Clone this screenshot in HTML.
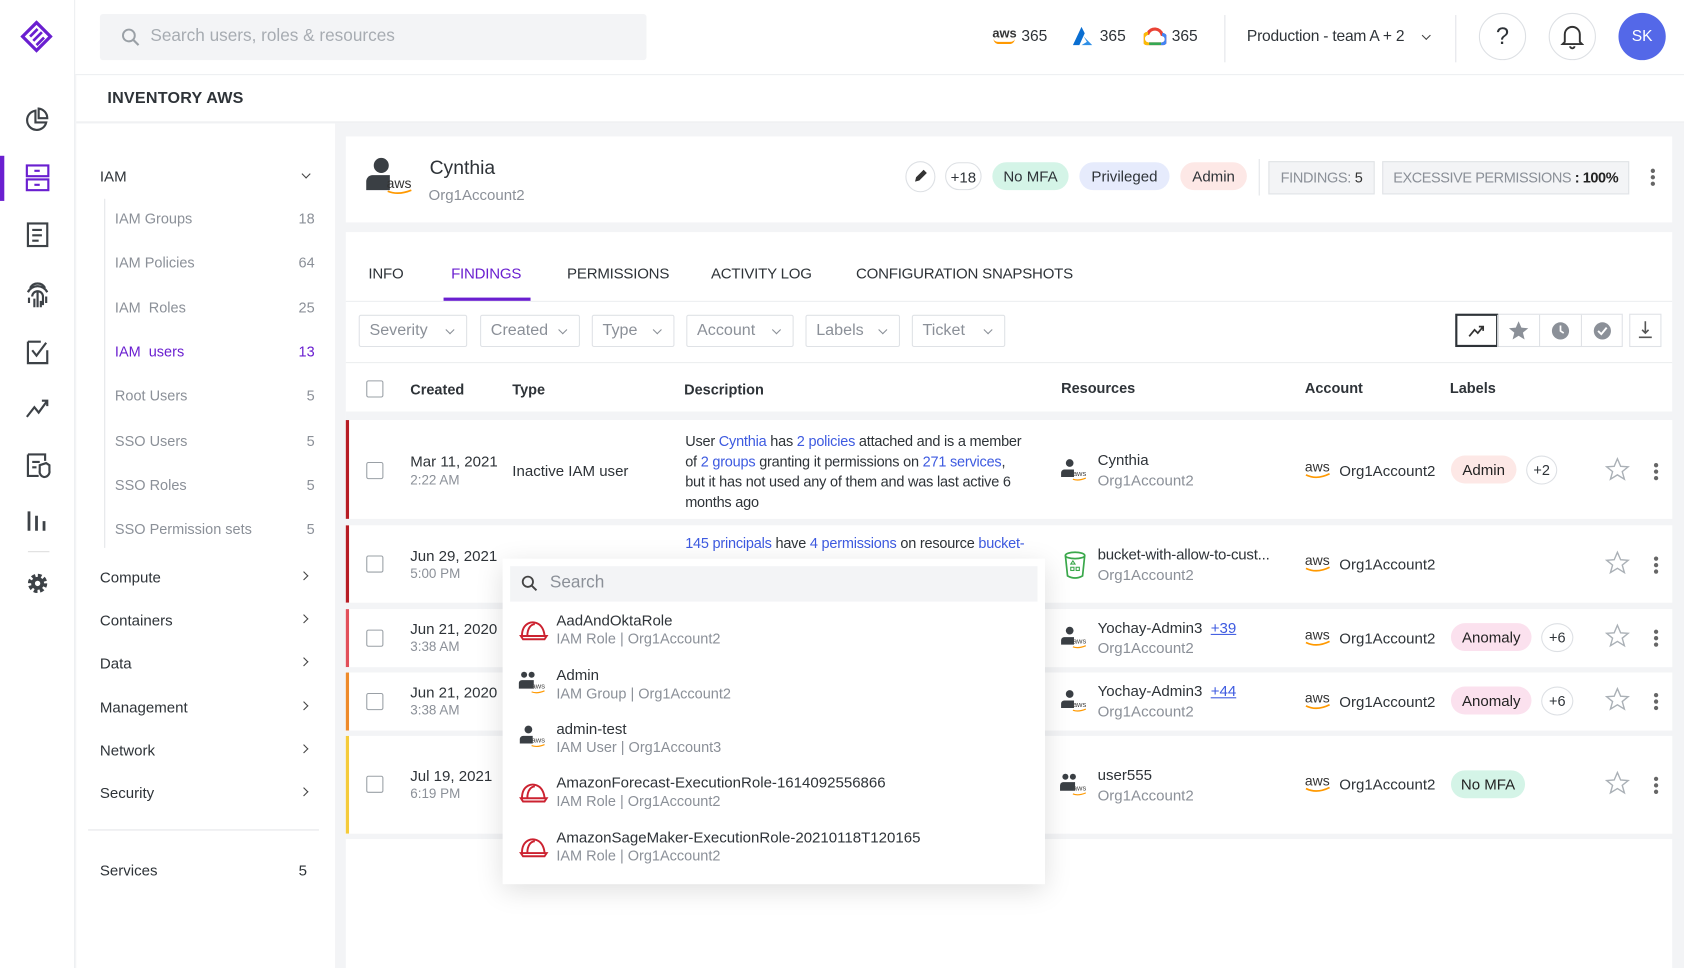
<!DOCTYPE html>
<html><head><meta charset="utf-8">
<style>
*{box-sizing:border-box;margin:0;padding:0}
html,body{width:1684px;height:968px;overflow:hidden;background:#fff}
#w{position:absolute;left:0;top:0;width:1568px;height:901px;transform:scale(1.07398,1.07436);transform-origin:0 0;font-family:"Liberation Sans",sans-serif;color:#2e3338;font-size:13.5px;background:#f3f4f6}
.a{position:absolute;white-space:nowrap}
.g{color:#8b9098}
.lk{color:#3d5ae0}
.pill{position:absolute;height:26px;line-height:26px;border-radius:13px;text-align:center;font-size:14px}
.circ{position:absolute;border:1px solid #dde0e4;border-radius:50%;background:#fff;text-align:center}
.flt{position:absolute;top:293px;height:30px;border:1px solid #dfe2e6;border-radius:2px;color:#8b9098;font-size:15px;line-height:28px;padding-left:9px;background:#fff}
.flt:after{content:"";position:absolute;right:12px;top:10px;width:5px;height:5px;border-right:1.5px solid #8b9098;border-bottom:1.5px solid #8b9098;transform:rotate(45deg)}
.cb{position:absolute;left:341px;width:16px;height:16px;border:1.5px solid #9aa0a6;border-radius:2px;background:#fff}
.row{position:absolute;left:322px;width:1235px;background:#fff}
.bar{position:absolute;left:0;top:0;bottom:0;width:3px}
.chev{position:absolute;width:6px;height:6px;border-right:1.5px solid #444;border-bottom:1.5px solid #444}
.sub{position:absolute;left:107px;color:#8b9098;font-size:13.5px}
.cnt{position:absolute;right:1275px;color:#8b9098;font-size:13.5px}
.cat{position:absolute;left:93px;font-size:14px;color:#2e3338}
.dots{position:absolute;width:4px;height:4px;background:#666;border-radius:50%;box-shadow:0 6px 0 #666,0 12px 0 #666}
.ddi{position:absolute;left:518px;font-size:14px;white-space:nowrap}
.ddi span{display:block;color:#8b9098;font-size:13.5px;margin-top:2px}
.tab{position:absolute;top:246px;font-size:14px;letter-spacing:-0.2px}
</style></head><body><div id="w">

<div class="a" style="left:0;top:0;width:1568px;height:70px;background:#fff;border-bottom:1px solid #eceef0"></div>
<div class="a" style="left:0;top:0;width:70px;height:901px;background:#fff;border-right:1px solid #eceef0"></div>
<svg class="a" style="left:19px;top:19px" width="30" height="32" viewBox="0 0 30 32"><path d="M15 2 L28 15 L15 28 L2 15Z" fill="none" stroke="#6a1fd0" stroke-width="3"/><path d="M9 15 L16 8 M12 19 L20 11 M15 23 L22 16" stroke="#6a1fd0" stroke-width="2.5"/></svg>
<div class="a" style="left:93px;top:13px;width:509px;height:43px;background:#f3f4f6;border-radius:3px"></div>
<svg class="a" style="left:113px;top:26px" width="18" height="18" viewBox="0 0 18 18"><circle cx="7" cy="7" r="5.5" fill="none" stroke="#9aa0a6" stroke-width="1.8"/><path d="M11 11 L16 16" stroke="#9aa0a6" stroke-width="2"/></svg>
<div class="a" style="left:140px;top:25px;font-size:16px;color:#a7acb2">Search users, roles &amp; resources</div>

<div class="a" style="left:924px;top:24px;font-size:12px;color:#333;font-weight:bold">aws</div>
<div class="a" style="left:925px;top:36px;width:20px;height:5px;border-bottom:2px solid #f90;border-radius:0 0 10px 10px"></div>
<div class="a" style="left:951px;top:26px;font-size:14.5px">365</div>
<svg class="a" style="left:998px;top:25px" width="20" height="18" viewBox="0 0 20 18"><path d="M9 0 L1 17 L7 17 L12 6Z" fill="#0a6ed1"/><path d="M11 9 L19 17 L9 17 L14 14Z" fill="#2f8fe6"/></svg>
<div class="a" style="left:1024px;top:26px;font-size:14.5px">365</div>
<svg class="a" style="left:1065px;top:25px" width="21" height="17" viewBox="0 0 21 17"><path d="M5 16 A5 5 0 0 1 4 6 A7 7 0 0 1 17 7 A4.5 4.5 0 0 1 16 16Z" fill="none" stroke="#ea4335" stroke-width="3"/><path d="M5 16 H16" stroke="#34a853" stroke-width="3"/><path d="M16 16 A4.5 4.5 0 0 0 17 7" fill="none" stroke="#4285f4" stroke-width="3"/><path d="M4 6 A5 5 0 0 0 5 16" fill="none" stroke="#fbbc05" stroke-width="3"/></svg>
<div class="a" style="left:1091px;top:26px;font-size:14.5px">365</div>
<div class="a" style="left:1140px;top:14px;width:1px;height:44px;background:#e2e4e8"></div>
<div class="a" style="left:1161px;top:26px;font-size:14.5px;letter-spacing:-0.2px">Production - team A + 2</div>
<div class="chev" style="left:1325px;top:30px;transform:rotate(45deg);border-color:#444"></div>
<div class="a" style="left:1355px;top:14px;width:1px;height:44px;background:#e2e4e8"></div>
<div class="circ" style="left:1377px;top:12px;width:44px;height:44px;line-height:42px;font-size:22px">?</div>
<div class="circ" style="left:1442px;top:12px;width:44px;height:44px"></div>
<svg class="a" style="left:1453px;top:22px" width="22" height="24" viewBox="0 0 22 24"><path d="M4 17 V10 A7 7 0 0 1 18 10 V17 L20 19 H2Z M9 21 A2 2 0 0 0 13 21" fill="none" stroke="#333" stroke-width="1.8"/></svg>
<div class="a" style="left:1507px;top:12px;width:44px;height:44px;border-radius:50%;background:#5468e8;color:#fff;text-align:center;line-height:44px;font-size:14.5px">SK</div>

<div class="a" style="left:0;top:145px;width:4px;height:42px;background:#6a1fd0"></div>
<svg class="a" style="left:22px;top:100px" width="26" height="460" viewBox="0 0 26 460" fill="none" stroke="#3d4247" stroke-width="2">
<path d="M11 3 A9 9 0 1 0 21 14 H11Z M14 1 A9 9 0 0 1 22 10 H14Z"/>
<g stroke="#6a1fd0"><rect x="3" y="54" width="20" height="10"/><rect x="3" y="67" width="20" height="10"/><path d="M10 59 H15 M10 72 H15"/></g>
<rect x="4" y="108" width="18" height="21"/><path d="M8 114 H17 M8 119 H17 M8 124 H14"/>
<path d="M6 168 A8 8 0 0 1 20 168 M4 172 A10 10 0 0 1 22 172 M8 176 A5 5 0 0 1 18 176 V184 M13 172 V186 M10 178 V186 M16 180 V186 M5 177 V182 M21 176 V182"/>
<path d="M4 218 H16 M4 218 V238 H22 V226 M8 226 L12 231 L21 219"/>
<path d="M3 288 L10 279 L14 284 L22 273 M17 273 H22 V278"/>
<path d="M4 323 H20 V329 M4 323 V343 H14 M8 330 H15 M8 335 H12 M15 333 L21 331 L24 333 V338 A5 5 0 0 1 19 344 A5 5 0 0 1 15 338Z"/>
<path d="M5 376 V394 M12 380 V394 M19 385 V394" stroke-width="2.6"/>
</svg>
<div class="a" style="left:26px;top:513px;width:20px;height:1px;background:#ddd"></div>
<svg class="a" style="left:24px;top:532px" width="22" height="22" viewBox="0 0 22 22"><circle cx="11" cy="11" r="7" fill="none" stroke="#3d4247" stroke-width="4" stroke-dasharray="3.3 2.2"/><circle cx="11" cy="11" r="6" fill="#3d4247"/><circle cx="11" cy="11" r="2.5" fill="#fff"/></svg>

<div class="a" style="left:71px;top:70px;width:1497px;height:44px;background:#fff;border-bottom:1px solid #eceef0"></div>
<div class="a" style="left:100px;top:83px;font-size:15px;font-weight:bold;color:#2e3338;letter-spacing:0.2px">INVENTORY AWS</div>

<div class="a" style="left:71px;top:115px;width:241px;height:786px;background:#fff"></div>
<div class="cat" style="top:156px">IAM</div>
<div class="chev" style="left:282px;top:159px;transform:rotate(45deg)"></div>
<div class="a" style="left:97px;top:185px;width:1px;height:325px;background:#e4e6e9"></div>
<div class="sub" style="top:196px">IAM Groups</div><div class="cnt" style="top:196px">18</div>
<div class="sub" style="top:237px">IAM Policies</div><div class="cnt" style="top:237px">64</div>
<div class="sub" style="top:279px">IAM &nbsp;Roles</div><div class="cnt" style="top:279px">25</div>
<div class="sub" style="top:320px;color:#6a1fd0">IAM &nbsp;users</div><div class="cnt" style="top:320px;color:#6a1fd0">13</div>
<div class="sub" style="top:361px">Root Users</div><div class="cnt" style="top:361px">5</div>
<div class="sub" style="top:403px">SSO Users</div><div class="cnt" style="top:403px">5</div>
<div class="sub" style="top:444px">SSO Roles</div><div class="cnt" style="top:444px">5</div>
<div class="sub" style="top:485px">SSO Permission sets</div><div class="cnt" style="top:485px">5</div>
<div class="cat" style="top:529px">Compute</div><div class="chev" style="left:280px;top:533px;transform:rotate(-45deg)"></div>
<div class="cat" style="top:569px">Containers</div><div class="chev" style="left:280px;top:573px;transform:rotate(-45deg)"></div>
<div class="cat" style="top:609px">Data</div><div class="chev" style="left:280px;top:613px;transform:rotate(-45deg)"></div>
<div class="cat" style="top:650px">Management</div><div class="chev" style="left:280px;top:654px;transform:rotate(-45deg)"></div>
<div class="cat" style="top:690px">Network</div><div class="chev" style="left:280px;top:694px;transform:rotate(-45deg)"></div>
<div class="cat" style="top:730px">Security</div><div class="chev" style="left:280px;top:734px;transform:rotate(-45deg)"></div>
<div class="a" style="left:82px;top:772px;width:215px;height:1px;background:#e4e6e9"></div>
<div class="cat" style="top:802px">Services</div><div class="a" style="left:278px;top:802px;font-size:14px">5</div>

<div class="a" style="left:322px;top:127px;width:1235px;height:80px;background:#fff"></div>
<svg class="a" style="left:339px;top:145px" width="48" height="38" viewBox="0 0 48 38"><circle cx="16" cy="9" r="7" fill="#3a3f44"/><path d="M2 32 V24 A6 6 0 0 1 8 18 H24 V32Z" fill="#3a3f44"/><text x="21" y="30" font-family="Liberation Sans" font-size="13" fill="#333">aws</text><path d="M22 33 Q32 37 44 32" stroke="#f90" stroke-width="1.6" fill="none"/></svg>
<div class="a" style="left:400px;top:146px;font-size:18px">Cynthia</div>
<div class="a g" style="left:399px;top:173px;font-size:14px">Org1Account2</div>
<div class="circ" style="left:843px;top:150px;width:28px;height:29px"></div>
<svg class="a" style="left:849px;top:156px" width="16" height="16" viewBox="0 0 16 16"><path d="M3 13 L4 9 L11 2 L14 5 L7 12Z" fill="#333"/></svg>
<div class="pill" style="left:880px;top:151px;width:34px;border:1px solid #dde0e4;background:#fff">+18</div>
<div class="pill" style="left:924px;top:151px;width:71px;background:#d4f4e7">No MFA</div>
<div class="pill" style="left:1005px;top:151px;width:84px;background:#e6ebfc">Privileged</div>
<div class="pill" style="left:1099px;top:151px;width:62px;background:#fde8e6">Admin</div>
<div class="a" style="left:1172px;top:148px;width:1px;height:34px;background:#e2e4e8"></div>
<div class="a g" style="left:1181px;top:150px;width:99px;height:31px;background:#f3f4f6;border:1px solid #e0e2e6;line-height:29px;text-align:center;font-size:13.5px;letter-spacing:-0.3px">FINDINGS: <span style="color:#333">5</span></div>
<div class="a g" style="left:1287px;top:150px;width:230px;height:31px;background:#f3f4f6;border:1px solid #e0e2e6;line-height:29px;text-align:center;font-size:13.5px;letter-spacing:-0.4px">EXCESSIVE PERMISSIONS <b style="color:#222">: 100%</b></div>
<div class="dots" style="left:1537px;top:157px"></div>

<div class="a" style="left:322px;top:216px;width:1235px;height:685px;background:#fff"></div>
<div class="a" style="left:322px;top:280px;width:1235px;height:1px;background:#eceef0"></div>
<div class="tab" style="left:343px">INFO</div>
<div class="tab" style="left:420px;color:#6a1fd0">FINDINGS</div>
<div class="a" style="left:413px;top:277px;width:81px;height:3px;background:#6a1fd0"></div>
<div class="tab" style="left:528px">PERMISSIONS</div>
<div class="tab" style="left:662px">ACTIVITY LOG</div>
<div class="tab" style="left:797px">CONFIGURATION SNAPSHOTS</div>

<div class="flt" style="left:334px;width:101px">Severity</div>
<div class="flt" style="left:447px;width:93px">Created</div>
<div class="flt" style="left:551px;width:77px">Type</div>
<div class="flt" style="left:639px;width:100px">Account</div>
<div class="flt" style="left:750px;width:88px">Labels</div>
<div class="flt" style="left:849px;width:87px">Ticket</div>
<div class="a" style="left:1355px;top:292px;width:156px;height:31px;border:1px solid #dfe2e6;background:#fff"></div>
<div class="a" style="left:1355px;top:292px;width:40px;height:31px;border:2px solid #2e3338"></div>
<svg class="a" style="left:1364px;top:298px" width="22" height="20" viewBox="0 0 22 20"><path d="M4 15 L9 9 L12 12 L17 6 M13 6 H17 V10" fill="none" stroke="#333" stroke-width="1.6"/></svg>
<div class="a" style="left:1433px;top:293px;width:1px;height:30px;background:#dfe2e6"></div>
<div class="a" style="left:1472px;top:293px;width:1px;height:30px;background:#dfe2e6"></div>
<div class="a" style="left:1394px;top:293px;width:1px;height:30px;background:#dfe2e6"></div>
<svg class="a" style="left:1404px;top:298px" width="20" height="20" viewBox="0 0 20 20"><path d="M10 1 L12.6 7 L19 7.5 L14 11.6 L15.6 18 L10 14.5 L4.4 18 L6 11.6 L1 7.5 L7.4 7Z" fill="#8b9098"/></svg>
<svg class="a" style="left:1443px;top:298px" width="20" height="20" viewBox="0 0 20 20"><circle cx="10" cy="10" r="8" fill="#8b9098"/><path d="M10 5 V10 L13 12" stroke="#fff" stroke-width="1.6" fill="none"/></svg>
<svg class="a" style="left:1482px;top:298px" width="20" height="20" viewBox="0 0 20 20"><circle cx="10" cy="10" r="8" fill="#8b9098"/><path d="M6 10 L9 13 L14 7" stroke="#fff" stroke-width="1.8" fill="none"/></svg>
<div class="a" style="left:1517px;top:292px;width:30px;height:31px;border:1px solid #dfe2e6"></div>
<svg class="a" style="left:1523px;top:297px" width="18" height="20" viewBox="0 0 18 20"><path d="M9 2 V13 M6 10 L9 13 L12 10 M3 17 H15" stroke="#555" stroke-width="1.5" fill="none"/></svg>
<div class="a" style="left:322px;top:337px;width:1235px;height:1px;background:#eceef0"></div>

<div class="cb" style="top:354px"></div>
<div class="a" style="left:382px;top:355px;font-weight:bold">Created</div>
<div class="a" style="left:477px;top:355px;font-weight:bold">Type</div>
<div class="a" style="left:637px;top:355px;font-weight:bold">Description</div>
<div class="a" style="left:988px;top:354px;font-weight:bold">Resources</div>
<div class="a" style="left:1215px;top:354px;font-weight:bold">Account</div>
<div class="a" style="left:1350px;top:354px;font-weight:bold">Labels</div>
<div class="a" style="left:322px;top:383px;width:1246px;height:8px;background:#f3f4f6"></div>

<div class="row" style="top:391px;height:92px"><div class="bar" style="background:#b71c24"></div></div>
<div class="a" style="left:322px;top:483px;width:1246px;height:6px;background:#f3f4f6"></div>
<div class="row" style="top:489px;height:72px"><div class="bar" style="background:#b71c24"></div></div>
<div class="a" style="left:322px;top:561px;width:1246px;height:6px;background:#f3f4f6"></div>
<div class="row" style="top:567px;height:54px"><div class="bar" style="background:#e2505a"></div></div>
<div class="a" style="left:322px;top:621px;width:1246px;height:5px;background:#f3f4f6"></div>
<div class="row" style="top:626px;height:54px"><div class="bar" style="background:#ee8a2a"></div></div>
<div class="a" style="left:322px;top:680px;width:1246px;height:5px;background:#f3f4f6"></div>
<div class="row" style="top:685px;height:91px"><div class="bar" style="background:#f5cb3a"></div></div>
<div class="a" style="left:322px;top:776px;width:1246px;height:5px;background:#f3f4f6"></div>

<div class="cb" style="top:430px"></div>
<div class="a" style="left:382px;top:421px;font-size:14px">Mar 11, 2021</div>
<div class="a g" style="left:382px;top:440px;font-size:12.5px">2:22 AM</div>
<div class="a" style="left:477px;top:430px;font-size:14px">Inactive IAM user</div>
<div class="a" style="left:638px;top:401px;font-size:13.5px;line-height:19px;letter-spacing:-0.2px">User <span class="lk">Cynthia</span> has <span class="lk">2 policies</span> attached and is a member<br>of <span class="lk">2 groups</span> granting it permissions on <span class="lk">271 services</span>,<br>but it has not used any of them and was last active 6<br>months ago</div>
<div class="cb" style="top:517px"></div>
<div class="a" style="left:382px;top:509px;font-size:14px">Jun 29, 2021</div>
<div class="a g" style="left:382px;top:527px;font-size:12.5px">5:00 PM</div>
<div class="a" style="left:638px;top:498px;font-size:13.5px;letter-spacing:-0.2px"><span class="lk">145 principals</span> have <span class="lk">4 permissions</span> on resource <span class="lk">bucket-</span></div>
<div class="cb" style="top:586px"></div>
<div class="a" style="left:382px;top:577px;font-size:14px">Jun 21, 2020</div>
<div class="a g" style="left:382px;top:595px;font-size:12.5px">3:38 AM</div>
<div class="cb" style="top:645px"></div>
<div class="a" style="left:382px;top:636px;font-size:14px">Jun 21, 2020</div>
<div class="a g" style="left:382px;top:654px;font-size:12.5px">3:38 AM</div>
<div class="cb" style="top:722px"></div>
<div class="a" style="left:382px;top:714px;font-size:14px">Jul 19, 2021</div>
<div class="a g" style="left:382px;top:732px;font-size:12.5px">6:19 PM</div>

<svg width="0" height="0" style="position:absolute"><defs>
<g id="usr"><circle cx="9" cy="5" r="3.6" fill="#3a3f44"/><path d="M1 18 V14 A3 3 0 0 1 4 11 H13 V18Z" fill="#3a3f44"/><text x="12" y="17" font-family="Liberation Sans" font-size="7" fill="#444">aws</text><path d="M12 20 Q17 22 24 19" stroke="#f90" stroke-width="1.1" fill="none"/></g>
<g id="grp"><circle cx="5" cy="4" r="2.8" fill="#3a3f44"/><circle cx="12" cy="4" r="2.8" fill="#3a3f44"/><path d="M0 17 V12 A3 3 0 0 1 3 9 H14 V17Z" fill="#3a3f44"/><text x="12" y="17" font-family="Liberation Sans" font-size="7" fill="#444">aws</text><path d="M12 20 Q17 22 24 19" stroke="#f90" stroke-width="1.1" fill="none"/></g>
<g id="role"><path d="M3 18 C3 6 13 2 20 8 C24 12 24 18 24 18 M2 18 H26 L24 21 H4Z M8 18 C8 10 12 7 15 7" fill="none" stroke="#cc2230" stroke-width="1.8"/></g>
<g id="awsl"><text x="0" y="11" font-family="Liberation Sans" font-size="13" fill="#333">aws</text><path d="M1 14 Q11 19 23 13" stroke="#f90" stroke-width="1.6" fill="none"/></g>
</defs></svg>
<svg class="a" style="left:987px;top:426px" width="26" height="24"><use href="#usr"/></svg>
<div class="a" style="left:1022px;top:420px;font-size:14px">Cynthia</div><div class="a g" style="left:1022px;top:439px;font-size:14px">Org1Account2</div>
<svg class="a" style="left:989px;top:512px" width="24" height="28" viewBox="0 0 24 28"><ellipse cx="12" cy="5" rx="9" ry="3" fill="none" stroke="#3aa84b" stroke-width="1.6"/><path d="M3 5 L5 24 Q12 28 19 24 L21 5" fill="none" stroke="#3aa84b" stroke-width="1.6"/><rect x="8" y="16" width="3" height="3" fill="none" stroke="#3aa84b"/><rect x="13" y="16" width="3" height="3" fill="none" stroke="#3aa84b"/><path d="M8 13 L10 10 L12 13Z" fill="none" stroke="#3aa84b"/></svg>
<div class="a" style="left:1022px;top:508px;font-size:14px;letter-spacing:-0.2px">bucket-with-allow-to-cust...</div><div class="a g" style="left:1022px;top:527px;font-size:14px">Org1Account2</div>
<svg class="a" style="left:987px;top:582px" width="26" height="24"><use href="#usr"/></svg>
<div class="a" style="left:1022px;top:576px;font-size:14px">Yochay-Admin3 &nbsp;<span class="lk" style="text-decoration:underline">+39</span></div><div class="a g" style="left:1022px;top:595px;font-size:14px">Org1Account2</div>
<svg class="a" style="left:987px;top:641px" width="26" height="24"><use href="#usr"/></svg>
<div class="a" style="left:1022px;top:635px;font-size:14px">Yochay-Admin3 &nbsp;<span class="lk" style="text-decoration:underline">+44</span></div><div class="a g" style="left:1022px;top:654px;font-size:14px">Org1Account2</div>
<svg class="a" style="left:987px;top:719px" width="26" height="24"><use href="#grp"/></svg>
<div class="a" style="left:1022px;top:713px;font-size:14px">user555</div><div class="a g" style="left:1022px;top:732px;font-size:14px">Org1Account2</div>

<svg class="a" style="left:1215px;top:428px" width="26" height="20"><use href="#awsl"/></svg><div class="a" style="left:1247px;top:430px;font-size:14px">Org1Account2</div>
<svg class="a" style="left:1215px;top:515px" width="26" height="20"><use href="#awsl"/></svg><div class="a" style="left:1247px;top:517px;font-size:14px">Org1Account2</div>
<svg class="a" style="left:1215px;top:584px" width="26" height="20"><use href="#awsl"/></svg><div class="a" style="left:1247px;top:586px;font-size:14px">Org1Account2</div>
<svg class="a" style="left:1215px;top:643px" width="26" height="20"><use href="#awsl"/></svg><div class="a" style="left:1247px;top:645px;font-size:14px">Org1Account2</div>
<svg class="a" style="left:1215px;top:720px" width="26" height="20"><use href="#awsl"/></svg><div class="a" style="left:1247px;top:722px;font-size:14px">Org1Account2</div>

<div class="pill" style="left:1351px;top:424px;width:61px;background:#fde8e6;color:#222">Admin</div>
<div class="circ" style="left:1421px;top:424px;width:29px;height:27px;line-height:25px;font-size:13.5px">+2</div>
<div class="pill" style="left:1351px;top:580px;width:75px;background:#fbe1ee;color:#222">Anomaly</div>
<div class="circ" style="left:1435px;top:580px;width:30px;height:27px;line-height:25px;font-size:13.5px">+6</div>
<div class="pill" style="left:1351px;top:639px;width:75px;background:#fbe1ee;color:#222">Anomaly</div>
<div class="circ" style="left:1435px;top:639px;width:30px;height:27px;line-height:25px;font-size:13.5px">+6</div>
<div class="pill" style="left:1351px;top:717px;width:69px;background:#d4f4e7;color:#222">No MFA</div>

<svg class="a" style="left:1493px;top:425px" width="26" height="330" viewBox="0 0 26 330" fill="none" stroke="#aab0b6" stroke-width="1.3">
<path id="st" d="M13 2 L16 9 L23 9.5 L17.5 14 L19.5 21 L13 17 L6.5 21 L8.5 14 L3 9.5 L10 9Z"/>
<use href="#st" y="87"/><use href="#st" y="155"/><use href="#st" y="214"/><use href="#st" y="292"/></svg>
<div class="dots" style="left:1540px;top:431px"></div>
<div class="dots" style="left:1540px;top:518px"></div>
<div class="dots" style="left:1540px;top:586px"></div>
<div class="dots" style="left:1540px;top:645px"></div>
<div class="dots" style="left:1540px;top:723px"></div>

<div class="a" style="left:468px;top:520px;width:505px;height:303px;background:#fff;box-shadow:0 6px 24px rgba(0,0,0,0.13)"></div>
<div class="a" style="left:475px;top:527px;width:491px;height:33px;background:#f3f4f6"></div>
<svg class="a" style="left:485px;top:535px" width="16" height="16" viewBox="0 0 16 16"><circle cx="6.5" cy="6.5" r="4.8" fill="none" stroke="#444" stroke-width="1.7"/><path d="M10 10 L14.5 14.5" stroke="#444" stroke-width="1.8"/></svg>
<div class="a" style="left:512px;top:534px;font-size:16px;color:#8b9098">Search</div>
<svg class="a" style="left:483px;top:574px" width="28" height="24"><use href="#role"/></svg>
<div class="ddi" style="top:569px">AadAndOktaRole<span>IAM Role | Org1Account2</span></div>
<svg class="a" style="left:483px;top:624px" width="28" height="24"><use href="#grp"/></svg>
<div class="ddi" style="top:620px">Admin<span>IAM Group | Org1Account2</span></div>
<svg class="a" style="left:483px;top:674px" width="28" height="24"><use href="#usr"/></svg>
<div class="ddi" style="top:670px">admin-test<span>IAM User | Org1Account3</span></div>
<svg class="a" style="left:483px;top:725px" width="28" height="24"><use href="#role"/></svg>
<div class="ddi" style="top:720px">AmazonForecast-ExecutionRole-1614092556866<span>IAM Role | Org1Account2</span></div>
<svg class="a" style="left:483px;top:776px" width="28" height="24"><use href="#role"/></svg>
<div class="ddi" style="top:771px">AmazonSageMaker-ExecutionRole-20210118T120165<span>IAM Role | Org1Account2</span></div>

</div></body></html>
